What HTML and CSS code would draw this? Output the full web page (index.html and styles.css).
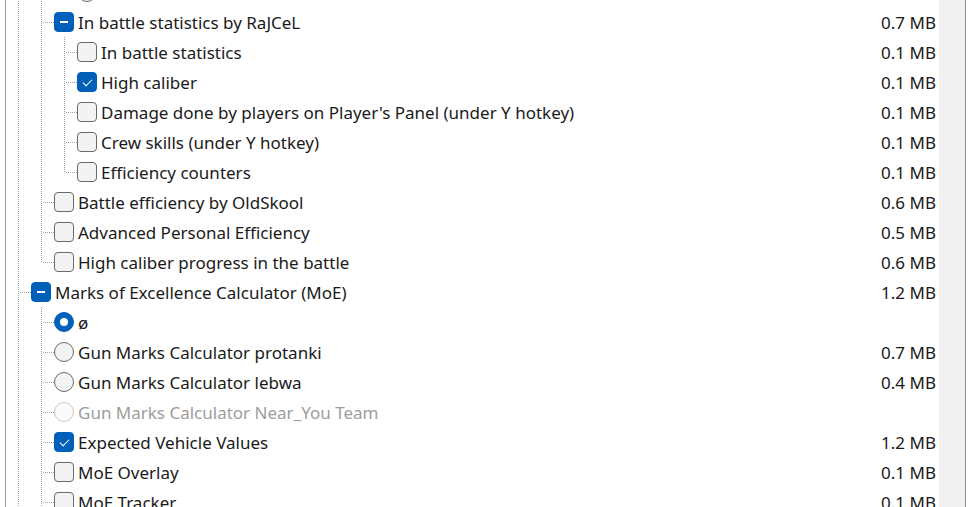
FILE: index.html
```html
<!DOCTYPE html>
<html>
<head>
<meta charset="utf-8">
<link rel="stylesheet" href="styles.css">
</head>
<body>
<div class="tree">
  <div class="list">
    <div class="row"><span class="g pipe"></span><span class="g pipe"></span><span class="g elbow"></span><span class="radio"></span><span class="label"></span><span class="size"></span></div>
    <div class="row"><span class="g pipe"></span><span class="g tee"></span><span class="cb mixed"></span><span class="label">In battle statistics by RaJCeL</span><span class="size">0.7 MB</span></div>
    <div class="row"><span class="g pipe"></span><span class="g pipe"></span><span class="g tee"></span><span class="cb"></span><span class="label">In battle statistics</span><span class="size">0.1 MB</span></div>
    <div class="row"><span class="g pipe"></span><span class="g pipe"></span><span class="g tee"></span><span class="cb checked"></span><span class="label">High caliber</span><span class="size">0.1 MB</span></div>
    <div class="row"><span class="g pipe"></span><span class="g pipe"></span><span class="g tee"></span><span class="cb"></span><span class="label">Damage done by players on Player's Panel (under Y hotkey)</span><span class="size">0.1 MB</span></div>
    <div class="row"><span class="g pipe"></span><span class="g pipe"></span><span class="g tee"></span><span class="cb"></span><span class="label">Crew skills (under Y hotkey)</span><span class="size">0.1 MB</span></div>
    <div class="row"><span class="g pipe"></span><span class="g pipe"></span><span class="g elbow"></span><span class="cb"></span><span class="label">Efficiency counters</span><span class="size">0.1 MB</span></div>
    <div class="row"><span class="g pipe"></span><span class="g tee"></span><span class="cb"></span><span class="label">Battle efficiency by OldSkool</span><span class="size">0.6 MB</span></div>
    <div class="row"><span class="g pipe"></span><span class="g tee"></span><span class="cb"></span><span class="label">Advanced Personal Efficiency</span><span class="size">0.5 MB</span></div>
    <div class="row"><span class="g pipe"></span><span class="g elbow"></span><span class="cb"></span><span class="label">High caliber progress in the battle</span><span class="size">0.6 MB</span></div>
    <div class="row"><span class="g tee"></span><span class="cb mixed"></span><span class="label">Marks of Excellence Calculator (MoE)</span><span class="size">1.2 MB</span></div>
    <div class="row"><span class="g pipe"></span><span class="g tee"></span><span class="radio on"></span><span class="label">ø</span><span class="size"></span></div>
    <div class="row"><span class="g pipe"></span><span class="g tee"></span><span class="radio"></span><span class="label">Gun Marks Calculator protanki</span><span class="size">0.7 MB</span></div>
    <div class="row"><span class="g pipe"></span><span class="g tee"></span><span class="radio"></span><span class="label">Gun Marks Calculator lebwa</span><span class="size">0.4 MB</span></div>
    <div class="row disabled"><span class="g pipe"></span><span class="g tee"></span><span class="radio"></span><span class="label">Gun Marks Calculator Near_You Team</span><span class="size"></span></div>
    <div class="row"><span class="g pipe"></span><span class="g tee"></span><span class="cb checked"></span><span class="label">Expected Vehicle Values</span><span class="size">1.2 MB</span></div>
    <div class="row"><span class="g pipe"></span><span class="g tee"></span><span class="cb"></span><span class="label">MoE Overlay</span><span class="size">0.1 MB</span></div>
    <div class="row"><span class="g pipe"></span><span class="g tee"></span><span class="cb"></span><span class="label">MoE Tracker</span><span class="size">0.1 MB</span></div>
  </div>
  <div class="scrollbar"></div>
</div>
</body>
</html>
```
FILE: styles.css
```css
html, body {
  margin: 0;
  padding: 0;
  background: #ffffff;
  overflow: hidden;
}

.tree {
  box-sizing: border-box;
  margin-left: 5px;
  width: 961px;
  height: 507px;
  border-left: 1px solid #a0a0a0;
  border-right: 1px solid #8c8c8c;
  display: flex;
  overflow: hidden;
  font-family: "Noto Sans", "Open Sans", sans-serif;
  font-size: 17px;
  color: #1a1a1a;
}

.list {
  flex: 1;
  margin-top: -23px;
  padding-left: 2px;
  padding-right: 3px;
}

.scrollbar {
  width: 26px;
  flex: none;
  background: #f0f0f0;
}

.row {
  display: flex;
  align-items: center;
  height: 30px;
  white-space: nowrap;
}

.g {
  flex: none;
  width: 23px;
  height: 30px;
}

.pipe {
  background: repeating-linear-gradient(to bottom, #a0a0a0 0 1px, transparent 1px 2px) 10px 0 / 1px 100% no-repeat;
}

.tee {
  background:
    repeating-linear-gradient(to bottom, #a0a0a0 0 1px, transparent 1px 2px) 10px 0 / 1px 100% no-repeat,
    repeating-linear-gradient(to right, #a0a0a0 0 1px, transparent 1px 2px) 12px 15px / 11px 1px no-repeat;
}

.elbow {
  background:
    repeating-linear-gradient(to bottom, #a0a0a0 0 1px, transparent 1px 2px) 10px 0 / 1px 16px no-repeat,
    repeating-linear-gradient(to right, #a0a0a0 0 1px, transparent 1px 2px) 12px 15px / 11px 1px no-repeat;
}

.cb, .radio {
  flex: none;
  box-sizing: border-box;
  width: 20px;
  height: 20px;
  border: 1px solid #6a6a6a;
  background: #f3f3f3;
  display: flex;
  align-items: center;
  justify-content: center;
}

.cb {
  border-radius: 4px;
}

.radio {
  border-radius: 50%;
}

.cb.checked, .cb.mixed, .radio.on {
  background: #005fb8;
  border-color: #005fb8;
}

.cb.checked::after {
  content: "";
  width: 8px;
  height: 4px;
  border-left: 1px solid #ffffff;
  border-bottom: 1px solid #ffffff;
  transform: translate(0, -1px) rotate(-45deg);
}

.cb.mixed::after {
  content: "";
  width: 8px;
  height: 2px;
  background: #ffffff;
}

.radio.on::after {
  content: "";
  width: 8px;
  height: 8px;
  border-radius: 50%;
  background: #ffffff;
}

.disabled .radio {
  border-color: #c6c6c6;
  background: #fafafa;
}

.disabled .label {
  color: #9d9d9d;
}

.label {
  margin-left: 4px;
  flex: 1;
}

.size {
  flex: none;
}
```
